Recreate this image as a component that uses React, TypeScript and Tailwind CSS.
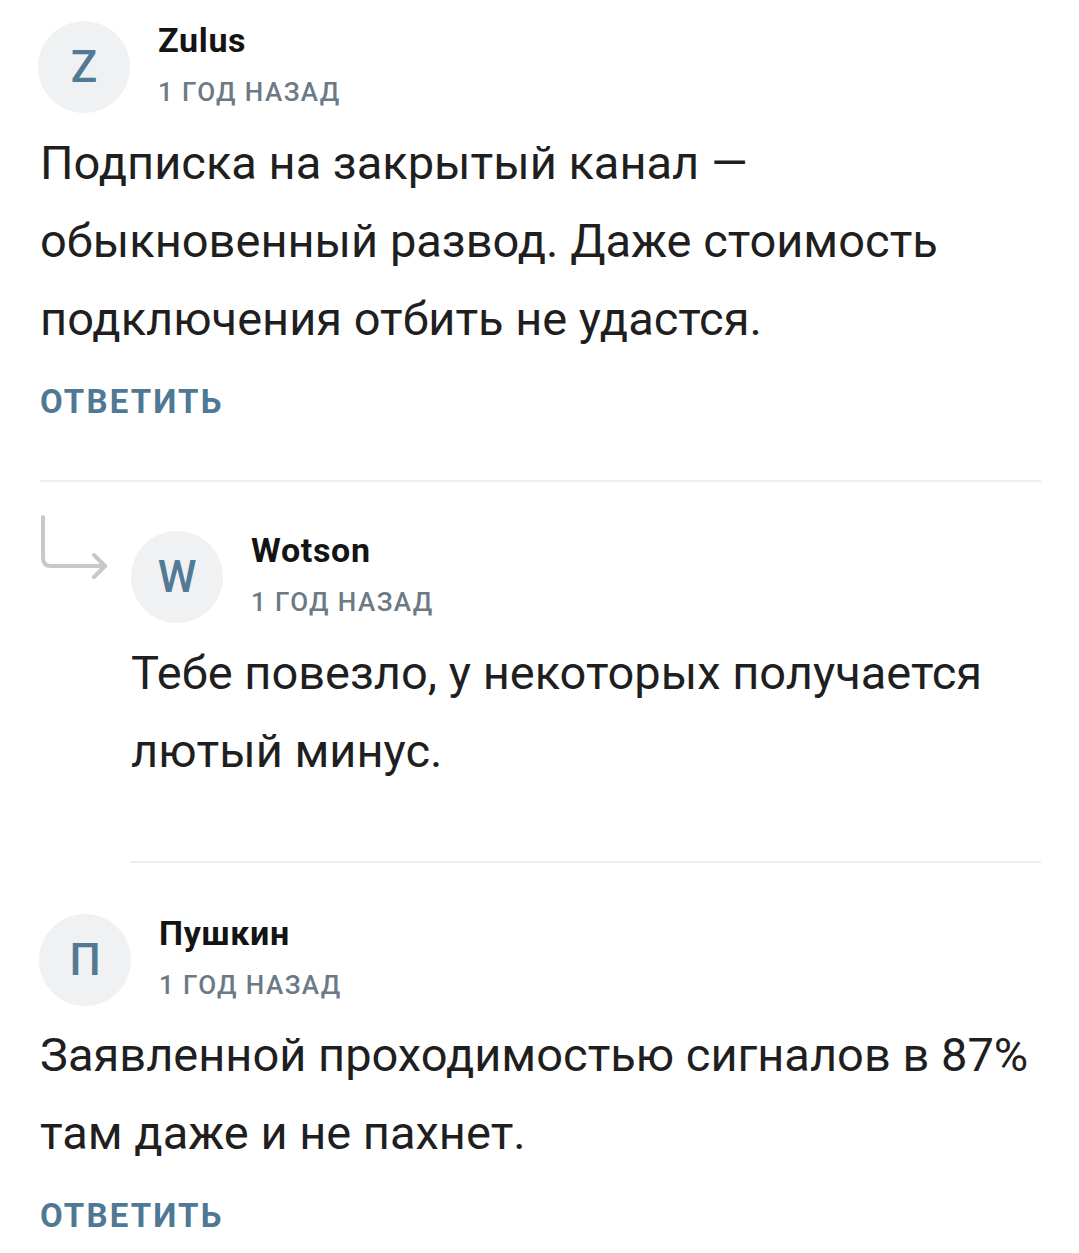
import { FC } from "react";

type Author = {
  letter: string;
  name: string;
  time: string;
};

const Avatar: FC<{ letter: string }> = ({ letter }) => (
  <div className="w-[92px] h-[92px] shrink-0 rounded-full bg-[#eff1f3] flex items-center justify-center">
    <span className="text-[44px] font-medium text-[#527a94] leading-none">{letter}</span>
  </div>
);

const Header: FC<{ a: Author }> = ({ a }) => (
  <div className="flex items-center">
    <Avatar letter={a.letter} />
    <div className="ml-[28px] mb-[6px] flex flex-col">
      <span className="text-[34px] font-bold tracking-[0.02em] text-[#141414] leading-[40px]">{a.name}</span>
      <span className="mt-[16px] text-[26px] font-medium tracking-[0.055em] text-[#6c7a85] leading-[32px]">{a.time}</span>
    </div>
  </div>
);

const ReplyArrow: FC = () => (
  <svg width="72" height="72" viewBox="0 0 72 72" fill="none" className="shrink-0">
    <path d="M3 2 V43 Q3 51 11 51 H65" stroke="#c6c8cb" strokeWidth="4" strokeLinecap="round" />
    <path d="M54 40 L65 51 L54 62" stroke="#c6c8cb" strokeWidth="4" strokeLinecap="round" strokeLinejoin="round" />
  </svg>
);

const ReplyButton: FC = () => (
  <div className="mt-[24px] text-[33px] font-bold tracking-[0.065em] text-[#4e7893] leading-[40px]">ОТВЕТИТЬ</div>
);

const App: FC = () => (
  <div className="w-[1079px] h-[1253px] bg-white px-[38px] pt-[20px] overflow-hidden" style={{ fontFamily: "Roboto, 'Noto Sans', sans-serif" }}>
    {/* first comment */}
    <div>
      <Header a={{ letter: "Z", name: "Zulus", time: "1 ГОД НАЗАД" }} />
      <p className="mt-[10px] ml-[2px] text-[47px] leading-[78px] text-[#1f1f1f]">
        Подписка на закрытый канал — обыкновенный развод. Даже стоимость подключения отбить не удастся.
      </p>
      <div className="ml-[2px]"><ReplyButton /></div>
    </div>

    <div className="mt-[58px] ml-[2px] h-[2px] bg-[#eeeeee]" />

    {/* nested reply */}
    <div className="flex mt-[31px]">
      <div className="ml-[2px] mt-[2px] w-[91px] shrink-0">
        <ReplyArrow />
      </div>
      <div className="flex-1">
        <div className="mt-[17px]">
          <Header a={{ letter: "W", name: "Wotson", time: "1 ГОД НАЗАД" }} />
        </div>
        <p className="mt-[10px] text-[47px] leading-[78px] text-[#1f1f1f] pr-[20px]">
          Тебе повезло, у некоторых получается лютый минус.
        </p>
      </div>
    </div>

    <div className="mt-[71px] ml-[92px] h-[2px] bg-[#eeeeee]" />

    {/* third comment */}
    <div className="mt-[50px]">
      <div className="ml-[1px]">
        <Header a={{ letter: "П", name: "Пушкин", time: "1 ГОД НАЗАД" }} />
      </div>
      <p className="mt-[9px] ml-[2px] text-[47px] leading-[78px] text-[#1f1f1f]">
        Заявленной проходимостью сигналов в 87% там даже и не пахнет.
      </p>
      <div className="ml-[2px]"><ReplyButton /></div>
    </div>
  </div>
);

export default App;
